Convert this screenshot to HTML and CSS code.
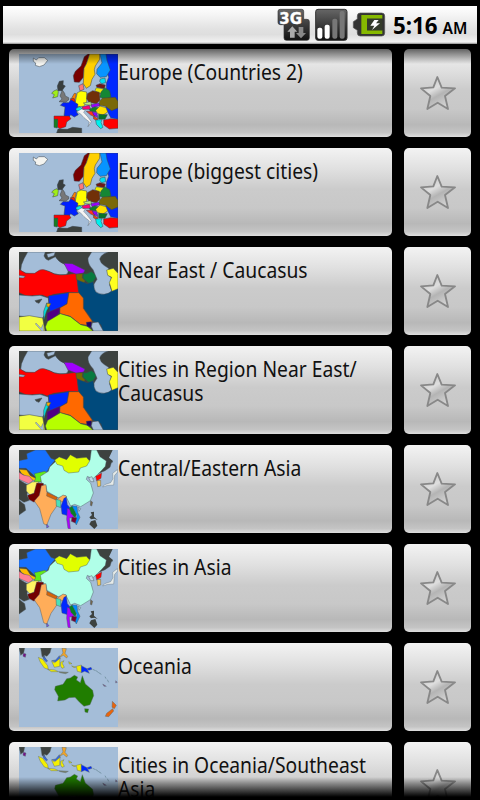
FILE: index.html
```
<!DOCTYPE html>
<html lang="en">
<head>
<meta charset="utf-8">
<title>Maps</title>
<link rel="stylesheet" href="styles.css">
</head>
<body>
<svg class="defs" aria-hidden="true">
  <defs>
    <linearGradient id="dark" x1="0" y1="0" x2="0" y2="1"><stop offset="0" stop-color="#666"/><stop offset="1" stop-color="#111"/></linearGradient>
    <linearGradient id="starfill" x1="0" y1="0" x2=".6" y2="1"><stop offset="0" stop-color="#bbb"/><stop offset=".45" stop-color="#dedede"/><stop offset=".65" stop-color="#b4b4b4"/><stop offset="1" stop-color="#d4d4d4"/></linearGradient>
  </defs>
  <symbol id="star" viewBox="112 99 120 120">
    <path d="M170 111L183 143L223 145L193 168L202 207L171 188L140 207L149 168L121 145L158 142Z" fill="url(#starfill)" stroke="#888" stroke-width="5.5" stroke-linejoin="round"/>
  </symbol>
  <symbol id="europe" viewBox="15 12 297 237">
    <rect x="15" y="12" width="297" height="237" fill="#a4bdd8"/>
    <g stroke="#38424a" stroke-width="1.5" stroke-linejoin="round">
      <path d="M58 24L67 30L74 23L91 23L101 31L90 45L76 50L64 46L65 39L58 34Z" fill="#f4f4f0"/>
      <path d="M274 12H312V208L290 203L276 175L277 100L284 82L277 62Z" fill="#0028ff"/>
      <path d="M222 12H227L217 42L210 55L208 82L196 97L181 96L178 77L184 64L201 48L211 20Z" fill="#780000"/>
      <path d="M227 12H257V28L244 48L241 59L243 73L234 88L229 107L217 115L208 101L210 55L217 42Z" fill="#ffd000"/>
      <path d="M258 12H276L279 31L289 60L277 80L258 82L248 71L249 58L264 39Z" fill="#0894ff"/>
      <path d="M259 87L273 84L275 98L263 101L257 94Z" fill="#00e0f0"/>
      <path d="M136 94L148 92L147 104L154 108L144 122L132 122L130 108Z" fill="#383e3e"/>
      <path d="M145 120L152 130L154 138L164 143L164 150L154 157L135 155L144 147L138 138Z" fill="#777"/>
      <path d="M119 123L129 119L133 125L131 140L116 144L121 134L113 130Z" fill="#a0ee18"/>
      <path d="M194 107L207 101L210 118L198 123Z" fill="#ff7878"/>
      <path d="M246 106L258 101L274 105L271 116L249 112Z" fill="#701818"/>
      <path d="M247 113L271 117L267 130L251 131L243 121Z" fill="#f0ec00"/>
      <path d="M272 113L287 122L291 141L275 148L257 142L261 126Z" fill="#148734"/>
      <path d="M190 128L201 123L218 126L218 156L209 169L188 170L183 159Z" fill="#ffff00"/>
      <path d="M220 131L236 122L256 127L258 151L247 161L225 157L218 146Z" fill="#713008"/>
      <path d="M257 153L266 144L304 142L312 154V174L293 182L274 169L254 166Z" fill="#7a6908"/>
      <path d="M173 144L181 130L187 131L181 158Z" fill="#ff8000"/>
      <path d="M169 146L180 145L184 156L171 155Z" fill="#ff2000"/>
      <path d="M147 158L164 158L171 149L192 163L188 187L193 194L181 201L170 194L165 202L150 197L153 171L139 166Z" fill="#0020ff"/>
      <path d="M120 198L165 198L171 206L158 216L155 230L137 236L130 230L131 211L120 208Z" fill="#ff0000"/>
      <path d="M120 208L131 207L130 234L120 232Z" fill="#148020"/>
      <path d="M128 249L132 237L160 238L176 232L203 235V249Z" fill="#3d423f"/>
      <path d="M186 175L198 170L205 178L197 184L186 181Z" fill="#00e8f5"/>
      <path d="M188 186L202 177L214 180L209 187L220 199L232 215L222 230L226 216L210 203L199 191Z" fill="#f4f4f4" stroke-width="1"/>
      <path d="M208 159L230 155L233 166L215 164Z" fill="#bbed82"/>
      <path d="M204 171L226 166L230 178L207 178Z" fill="#ff0078"/>
      <path d="M231 164L254 159L258 167L234 173Z" fill="#9a00ff"/>
      <path d="M226 178L242 171L253 173L245 186L229 184Z" fill="#108428"/>
      <path d="M217 184L235 184L244 201L230 195Z" fill="#ff3020"/>
      <path d="M249 177L258 168L276 173L281 186L266 196L250 190L245 181Z" fill="#ffe000"/>
      <path d="M235 185L248 188L252 203L239 195Z" fill="#9000ff"/>
      <path d="M254 193L280 194L273 208L254 207Z" fill="#08742a"/>
      <path d="M238 199L252 206L249 211L239 207Z" fill="#ff4000"/>
      <path d="M245 210L264 209L261 217L267 232L260 236L247 223Z" fill="#00f0ed"/>
      <path d="M269 210L290 206L312 208V235L286 237L269 225Z" fill="#ff0000"/>
    </g>
  </symbol>
  <symbol id="neareast" viewBox="15 12 297 237">
    <rect x="15" y="12" width="297" height="237" fill="#3d423f"/>
    <g stroke="#40484f" stroke-width="1.5" stroke-linejoin="round">
      <path d="M41 12H94L90 24Q94 34 103 37L124 26Q134 42 150 48Q162 56 163 68Q162 79 154 80Q136 82 120 77Q98 66 80 67Q70 78 58 78Q34 78 20 68Q20 50 30 32Z" fill="#a4bdd8"/>
      <path d="M98 18L124 12L120 23L102 29Z" fill="#a4bdd8"/>
      <path d="M15 64L35 76L62 76Q78 62 90 65Q108 70 121 78Q140 83 155 80L187 76L190 101L194 134L165 133L119 139L99 147L84 141L57 143L39 145L15 134Z" fill="#ff0000"/>
      <path d="M15 82L34 85L28 90L15 89Z" fill="#a4bdd8"/>
      <path d="M150 46L175 47L213 66L209 75L188 79L162 69Z" fill="#a000ff"/>
      <path d="M186 78L206 77L205 89L214 99L207 106L187 94Z" fill="#796900"/>
      <path d="M208 77L219 77L232 71L249 83L240 97L234 115L207 91Z" fill="#087a3f"/>
      <path d="M190 96L220 107L237 101L247 131L276 135L293 128L312 122V249H265L261 230L235 219L222 198L208 181L209 160L194 133Z" fill="#004a7c"/>
      <path d="M233 12H283Q262 18 257 33Q260 46 270 52L284 61L284 82L292 89L287 111L293 129Q282 139 270 139Q254 139 245 131Q238 120 240 108L249 94L237 65Q220 48 222 30Z" fill="#a4bdd8"/>
      <path d="M278 66L298 61L312 76V122L294 130L286 104L293 88L281 82Z" fill="#ffff20"/>
      <path d="M15 141L55 144L78 142L103 150L105 170L93 199L85 211L15 204Z" fill="#a4bdd8"/>
      <path d="M104 144L164 134L160 166L138 180L108 193L105 170Z" fill="#0028ff"/>
      <path d="M165 134L194 134L208 150L208 181L235 220L228 233L199 229L169 205L138 197L137 180L159 168Z" fill="#ff6900"/>
      <path d="M99 194L138 178L136 195L117 214L99 224Z" fill="#500083"/>
      <path d="M98 165L110 167L98 188L89 218L89 190Z" fill="#00e0da"/>
      <path d="M98 166L110 167L105 177L99 177Z" fill="#ffb000"/>
      <path d="M15 207L46 203L86 210L93 249H15Z" fill="#f2ff42"/>
      <path d="M66 225L81 241L87 229L89 249H83L64 228Z" fill="#a4bdd8" stroke-width=".8"/>
      <path d="M94 237L101 220L139 197L169 206L200 230L220 235L237 249H98Z" fill="#b6ff00"/>
      <path d="M217 223L233 221L231 239L219 235Z" fill="#230064"/>
      <path d="M235 224L253 222L268 249H238L232 236Z" fill="#a4bdd8"/>
      <path d="M63 158L84 153L75 166L67 163Z" fill="#3d423f"/>
    </g>
  </symbol>
  <symbol id="asia" viewBox="15 12 297 237">
    <rect x="15" y="12" width="297" height="237" fill="#a4bdd8"/>
    <g stroke="#48545c" stroke-width="1.3" stroke-linejoin="round">
      <path d="M15 12H312V40L292 50L288 64L273 74L250 84L15 100Z" fill="#3d423f"/>
      <path d="M296 12H312V60L299 70L296 44L285 35Z" fill="#a4bdd8" stroke="none"/>
      <path d="M15 44L40 39L38 23L64 12L94 12L111 37L124 42L108 61L99 78L76 80L62 91L36 67L15 67Z" fill="#1770ff"/>
      <path d="M15 70L38 72L49 89L65 97L83 85L100 78L94 89L73 106L49 101L22 82Z" fill="#ffbd00"/>
      <path d="M15 79L28 87L46 91L57 104L44 113L15 100Z" fill="#ff8094"/>
      <path d="M61 83L93 76L101 84L84 88L86 98L80 108L60 109L65 96Z" fill="#62ed18"/>
      <path d="M79 91L103 76L107 63L123 48L134 34L160 45L211 50L228 43L232 12H248L258 32L277 45L274 61L264 72L250 86L236 99L220 91L217 100L230 112L238 141L229 164L200 182L182 175L170 180L155 149L132 155L99 136L96 119L83 111Z" fill="#b0ffe8"/>
      <path d="M122 42L136 33L158 41L169 26L188 37L217 34L227 45L218 60L199 66L194 78L164 81L150 73L146 60L129 55Z" fill="#e1ff00"/>
      <path d="M15 101L32 112L44 118L39 147L46 163L30 169L15 160Z" fill="#3d423f"/>
      <path d="M15 163L32 176L35 193L15 207Z" fill="#3d423f"/>
      <path d="M37 118L55 108L74 107L71 117L60 142L48 147L37 135Z" fill="#fff363"/>
      <path d="M68 111L88 112L89 126L77 146L71 166L59 168L44 160L41 148L60 142Z" fill="#740000"/>
      <path d="M82 119L96 116L98 138L130 160L147 147L158 151L147 168L139 167L129 179L111 205L98 238L89 233L77 188L61 165L76 148Z" fill="#ffad59"/>
      <path d="M99 139L130 154L128 163L98 150Z" fill="#d66408"/>
      <path d="M126 160L140 163L140 185L127 180Z" fill="#4be0b8"/>
      <path d="M150 157L157 154L160 176L168 185L164 212L157 208L144 204L141 180Z" fill="#0028ff"/>
      <path d="M160 187L183 197L180 215L166 216L169 249L162 247L158 220Z" fill="#ad00ff"/>
      <path d="M166 186L175 179L187 205L184 216L171 202Z" fill="#088025"/>
      <path d="M174 180L189 181L191 199L198 214L187 237L181 225L189 210L182 194Z" fill="#008dff"/>
      <path d="M174 213L188 216L184 231L172 226Z" fill="#760034"/>
      <path d="M245 91L263 81L261 97L248 105Z" fill="#ff0000"/>
      <path d="M249 104L260 103L260 120L251 122Z" fill="#ffc843"/>
      <path d="M296 82L310 71L311 78L302 88L300 104L299 117L281 118L266 123L272 116L290 110L297 98Z" fill="#e6ebea" stroke-width=".9"/>
      <path d="M98 234L105 242L98 246Z" fill="#7158e8"/>
      <path d="M230 164L236 169L233 180L229 178Z" fill="#75664c"/>
      <path d="M230 199L240 197L240 212L251 222L241 218L231 220L226 214L234 207ZM231 226L244 222L250 239L241 249L226 235Z" fill="#3d423f" stroke="none"/>
      <path d="M224 95L234 92L240 107L230 107ZM192 184L200 188L195 196Z" fill="#bddbe7"/>
    </g>
  </symbol>
  <symbol id="oceania" viewBox="15 12 297 237">
    <rect x="15" y="12" width="297" height="237" fill="#a4bdd8"/>
    <g stroke="#59676a" stroke-width="1.3" stroke-linejoin="round">
      <path d="M15 12H32L29 27L20 34ZM80 12H112L108 26L99 37L90 34L96 49L84 37Z" fill="#3d423f"/>
      <path d="M28 28L36 30L34 40L27 37Z" fill="#75108a"/>
      <path d="M88 35L101 51L97 54L88 45ZM113 50L125 48L136 35L139 43L127 55Z" fill="#3468df"/>
      <path d="M73 40L86 46L101 65L103 76L91 72L79 55ZM113 52L122 56L138 43L137 67L121 70ZM101 76L123 78L133 83L112 83ZM140 55L150 50L145 58L151 70L144 73L140 66ZM164 53L174 59L166 60ZM173 66L186 69L180 71ZM187 67L202 63V85L190 82Z" fill="#f4f000"/>
      <path d="M134 83L163 85L155 89L138 86Z" fill="#7d856f"/>
      <path d="M144 12L157 14L153 28L161 37L158 42L148 34L136 40L147 27Z" fill="#f3a529"/>
      <path d="M202 65L219 74L226 88L212 82L202 86ZM219 74L231 70L234 76L224 79Z" fill="#0028ff"/>
      <path d="M181 94L191 99L187 108L199 116L205 95L214 120L236 139L239 155L228 182L210 187L196 174L183 160L165 161L153 168L131 171L133 157L122 137L124 127L147 121L158 104L169 102Z" fill="#207d00"/>
      <path d="M212 194L224 195L221 206L213 204Z" fill="#207d00"/>
      <path d="M295 172L307 184L301 194L294 190ZM296 194L299 201L284 218L274 217L278 208Z" fill="#e8640d"/>
      <path d="M266 120L277 127L270 127ZM305 110L310 115L305 117Z" fill="#79548b" stroke-width="1"/>
      <path d="M236 76L245 80M246 80L254 86M254 86L262 91M273 98L276 104M280 107L284 115" fill="none" stroke="#7896a7" stroke-width="3"/>
    </g>
  </symbol>
</svg>
<div class="screen">
  <header class="status">
    <svg class="icons" viewBox="50 18 327 114">
      <path d="M60 28H124Q130 28 130 34V58H140Q147 58 147 65V114Q147 121 140 121H78Q71 121 71 114V74H60Q53 74 53 67V34Q53 28 60 28Z" fill="url(#dark)" stroke="#333" stroke-width="2"/>
      <text x="57" y="71" class="net" textLength="68" lengthAdjust="spacingAndGlyphs">3G</text>
      <path d="M96 79L111 95H103V113H89V95H81Z" fill="#aaa"/>
      <path d="M122 115L107 99H115V81H129V99H137Z" fill="#888"/>
      <rect x="166" y="28" width="94" height="93" rx="7" fill="url(#dark)" stroke="#333" stroke-width="3"/>
      <rect x="171" y="83" width="15" height="33" rx="6" fill="#fff"/>
      <rect x="193" y="74" width="15" height="42" rx="6" fill="#fff"/>
      <rect x="216" y="56" width="15" height="60" rx="6" fill="#777"/>
      <rect x="238" y="33" width="15" height="83" rx="6" fill="#777"/>
      <path d="M300 39H364Q373 39 373 48V99Q373 108 364 108H300Q291 108 291 99V91L279 83V65L291 57V48Q291 39 300 39Z" fill="#333" stroke="#555" stroke-width="2"/>
      <path d="M303 45H366V56H320V91H366V102H303Z" fill="#86b900"/>
      <path d="M320 56H366V91H320Z" fill="#343b2b"/>
      <path d="M342 60H355L347 70H359L335 90L342 77H330Z" fill="#fff"/>
    </svg>
    <span class="time">5:16</span><span class="ampm">AM</span>
  </header>
  <main class="list">
    <div class="row"><div class="card"><svg class="map"><use href="#europe"/></svg><p class="label">Europe (Countries 2)</p></div><div class="fav"><svg class="star"><use href="#star"/></svg></div></div>
    <div class="row"><div class="card"><svg class="map"><use href="#europe"/></svg><p class="label">Europe (biggest cities)</p></div><div class="fav"><svg class="star"><use href="#star"/></svg></div></div>
    <div class="row"><div class="card"><svg class="map"><use href="#neareast"/></svg><p class="label">Near East / Caucasus</p></div><div class="fav"><svg class="star"><use href="#star"/></svg></div></div>
    <div class="row"><div class="card"><svg class="map"><use href="#neareast"/></svg><p class="label">Cities in Region Near East/<br>Caucasus</p></div><div class="fav"><svg class="star"><use href="#star"/></svg></div></div>
    <div class="row"><div class="card"><svg class="map"><use href="#asia"/></svg><p class="label">Central/Eastern Asia</p></div><div class="fav"><svg class="star"><use href="#star"/></svg></div></div>
    <div class="row"><div class="card"><svg class="map"><use href="#asia"/></svg><p class="label">Cities in Asia</p></div><div class="fav"><svg class="star"><use href="#star"/></svg></div></div>
    <div class="row"><div class="card"><svg class="map"><use href="#oceania"/></svg><p class="label">Oceania</p></div><div class="fav"><svg class="star"><use href="#star"/></svg></div></div>
    <div class="row"><div class="card"><svg class="map"><use href="#oceania"/></svg><p class="label">Cities in Oceania/Southeast<br>Asia</p></div><div class="fav"><svg class="star"><use href="#star"/></svg></div></div>
  </main>
</div>
</body>
</html>
```
FILE: styles.css
```
* { box-sizing: border-box; }
body { margin: 0; background: #000; }
.defs { position: absolute; width: 0; height: 0; }
.screen {
  width: 480px;
  height: 800px;
  padding: 6px 3px 3px;
  display: flex;
  flex-direction: column;
  overflow: hidden;
  background: #000;
  font-family: "Noto Sans", "Open Sans", sans-serif;
  color: #111;
}
.status {
  flex: none;
  height: 38px;
  display: flex;
  align-items: baseline;
  background: linear-gradient(#fff, #f4f4f4 25%, #e2e2e2 60%, #dedede 75%, #f2f2f2 95%, #888);
  color: #000;
  padding-left: 273.5px;
}
.icons { width: 109px; height: 38px; flex: none; align-self: flex-start; }
.net { font: bold 46px "DejaVu Sans", sans-serif; fill: #fff; stroke: #fff; stroke-width: 1; }
.time {
  width: 50px;
  margin-left: 7px;
  font-size: 23.5px;
  line-height: 38px;
  font-weight: 700;
  transform: scaleX(.95);
  transform-origin: 0 0;
}
.ampm { font-size: 15.5px; font-weight: 600; transform: scaleX(1); transform-origin: 0 0; }
.list {
  position: relative;
  flex: 1;
  min-height: 0;
  overflow: hidden;
  padding: 5px 6px 0;
}
.list::before, .list::after {
  content: "";
  position: absolute;
  left: 0;
  right: 0;
  z-index: 1;
}
.list::before { top: 0; height: 20px; background: linear-gradient(rgba(0,0,0,.8), rgba(0,0,0,0)); }
.list::after { bottom: 0; height: 20px; background: linear-gradient(rgba(0,0,0,0), #000); }
.row { display: flex; gap: 12px; height: 89px; margin-bottom: 10px; }
.card, .fav {
  height: 88px;
  border-radius: 5px;
  background: linear-gradient(#f3f3f3, #e0e0e0 24%, #cbcbcb 47%, #c8c8c8 68%, #b8b8b8 86%, #c4c4c4 95%, #dedede);
}
.card { width: 383px; display: flex; padding: 5px 0 0 9.7px; }
.fav { width: 67px; display: flex; align-items: center; justify-content: center; }
.map { width: 99px; height: 79px; flex: none; }
.star { width: 40px; height: 40px; }
.label {
  margin: 6px 0 0;
  font-size: 21px;
  line-height: 24px;
  white-space: nowrap;
  transform: scaleX(.918);
  transform-origin: 0 0;
}
```
